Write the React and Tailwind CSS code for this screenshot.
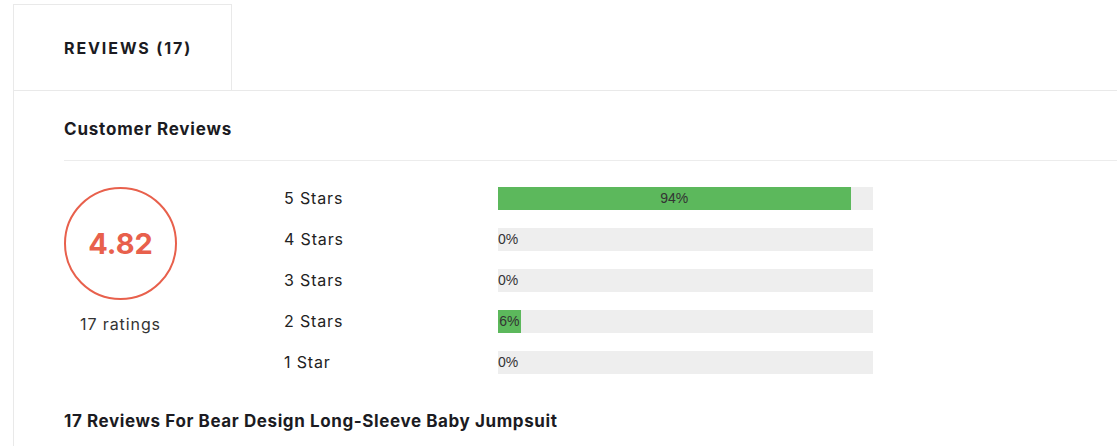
const rows = [
	{ label: "5 Stars", pct: 94 },
	{ label: "4 Stars", pct: 0 },
	{ label: "3 Stars", pct: 0 },
	{ label: "2 Stars", pct: 6 },
	{ label: "1 Star", pct: 0 },
];

function Bar({ pct }) {
	return (
		<div className="relative h-[23px] w-[375px] bg-[#eeeeee] font-['Liberation_Sans',Arial,sans-serif] text-[14px] leading-[23px] text-[#333]">
			{pct > 0 && (
				<div className="absolute inset-y-0 left-0 bg-[#5cb85c] text-center" style={{ width: `${pct}%` }}>
					{pct}%
				</div>
			)}
			{pct === 0 && <span className="absolute left-0 top-0">0%</span>}
		</div>
	);
}

export default function App() {
	return (
		<div className="min-h-[446px] bg-white font-['Inter',sans-serif] text-[#1b1b22]">
			<div className="pl-[13px] pt-[4px]">
				<div className="flex">
					<div className="flex h-[86px] w-[219px] items-center border border-b-0 border-[#e9e9e9] pl-[50px]">
						<span className="text-[16px] font-bold tracking-[1.9px]">REVIEWS (17)</span>
					</div>
				</div>
				<div className="border-l border-t border-[#e9e9e9] pl-[50px] pt-[26px]">
					<h3 className="text-[17px] font-bold leading-[24px] tracking-[0.8px]">Customer Reviews</h3>
					<div className="mt-[19px] border-t border-[#ececec]" />
					<div className="flex pt-[26px]">
						<div className="flex w-[113px] flex-col items-center">
							<div className="flex h-[113px] w-[113px] items-center justify-center rounded-full border-2 border-[#e8604c]">
								<span className="text-[29px] font-bold text-[#e8604c]">4.82</span>
							</div>
							<div className="mt-[12px] text-[16px] tracking-[0.9px] text-[#333]">17 ratings</div>
						</div>
						<div className="ml-[107px] flex flex-col gap-[18px]">
							{rows.map((r) => (
								<div key={r.label} className="flex h-[23px] items-center">
									<div className="w-[214px] text-[16px] leading-[23px] tracking-[0.85px] text-[#222]">{r.label}</div>
									<Bar pct={r.pct} />
								</div>
							))}
						</div>
					</div>
					<h3 className="mt-[35px] pb-[20px] text-[17px] font-bold tracking-[0.6px]">17 Reviews For Bear Design Long-Sleeve Baby Jumpsuit</h3>
				</div>
			</div>
		</div>
	);
}
